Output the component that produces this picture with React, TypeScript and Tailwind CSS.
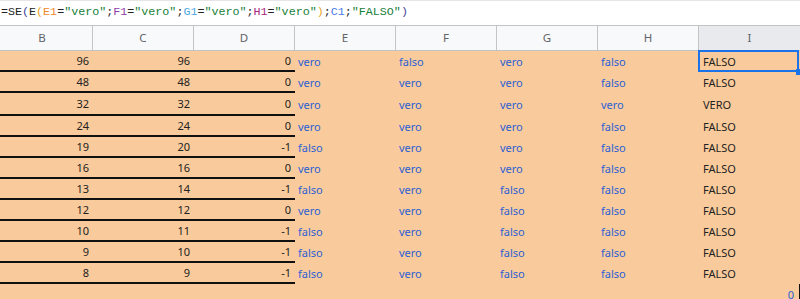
import React from 'react';

type Row = {
  b: string;
  c: string;
  d: string;
  e: string;
  f: string;
  g: string;
  h: string;
  i: string;
  tall?: boolean;
};

const rows: Row[] = [
  { b: '96', c: '96', d: '0', e: 'vero', f: 'falso', g: 'vero', h: 'falso', i: 'FALSO' },
  { b: '48', c: '48', d: '0', e: 'vero', f: 'vero', g: 'vero', h: 'falso', i: 'FALSO' },
  { b: '32', c: '32', d: '0', e: 'vero', f: 'vero', g: 'vero', h: 'vero', i: 'VERO', tall: true },
  { b: '24', c: '24', d: '0', e: 'vero', f: 'vero', g: 'vero', h: 'falso', i: 'FALSO' },
  { b: '19', c: '20', d: '-1', e: 'falso', f: 'vero', g: 'vero', h: 'falso', i: 'FALSO' },
  { b: '16', c: '16', d: '0', e: 'vero', f: 'vero', g: 'vero', h: 'falso', i: 'FALSO' },
  { b: '13', c: '14', d: '-1', e: 'falso', f: 'vero', g: 'falso', h: 'falso', i: 'FALSO' },
  { b: '12', c: '12', d: '0', e: 'vero', f: 'vero', g: 'falso', h: 'falso', i: 'FALSO' },
  { b: '10', c: '11', d: '-1', e: 'falso', f: 'vero', g: 'falso', h: 'falso', i: 'FALSO' },
  { b: '9', c: '10', d: '-1', e: 'falso', f: 'vero', g: 'falso', h: 'falso', i: 'FALSO' },
  { b: '8', c: '9', d: '-1', e: 'falso', f: 'vero', g: 'falso', h: 'falso', i: 'FALSO' },
];

const headers = ['B', 'C', 'D', 'E', 'F', 'G', 'H'];

function FormulaBar() {
  const str = 'text-[#188038]';
  return (
    <div className="h-[26px] border-t border-b border-t-[#e6e6e6] border-b-[#c4c4c4] flex items-center pl-[1px] whitespace-pre font-['Liberation_Mono',monospace] text-[11.7px] text-[#222]">
      <span>=SE</span>
      <span className="text-[#3a4599]">(</span>
      <span>E</span>
      <span className="text-[#e9a21b]">(</span>
      <span className="text-[#f08a2c]">E1</span>
      <span>=</span>
      <span className={str}>"vero"</span>
      <span>;</span>
      <span className="text-[#8e3ca8]">F1</span>
      <span>=</span>
      <span className={str}>"vero"</span>
      <span>;</span>
      <span className="text-[#4ea6df]">G1</span>
      <span>=</span>
      <span className={str}>"vero"</span>
      <span>;</span>
      <span className="text-[#a8287f]">H1</span>
      <span>=</span>
      <span className={str}>"vero"</span>
      <span className="text-[#e9a21b]">)</span>
      <span>;</span>
      <span className="text-[#4d7be8]">C1</span>
      <span>;</span>
      <span className={str}>"FALSO"</span>
      <span className="text-[#3a4599]">)</span>
    </div>
  );
}

function HeaderRow() {
  return (
    <div className="flex h-[25px] border-b border-[#c4c4c4] bg-[#f8f9fa] text-[11.5px] text-[#5f6368]">
      {headers.map((h, idx) => (
        <div
          key={h}
          className={
            idx === 0
              ? 'w-[93px] shrink-0 border-r border-[#c4c4c4] flex items-center justify-center pr-[8px]'
              : 'w-[101px] shrink-0 border-r border-[#c4c4c4] flex items-center justify-center'
          }
        >
          {h}
        </div>
      ))}
      <div className="flex-1 flex items-center justify-center bg-[#e8eaed]">I</div>
    </div>
  );
}

function DataRow({ row, selected }: { row: Row; selected: boolean }) {
  const h = row.tall ? 'h-[23px]' : 'h-[21px]';
  const blue = 'w-[101px] shrink-0 pl-[3px] text-[#2c5fd4] pt-[1px] flex items-center';
  return (
    <div className={`flex ${h}`}>
      <div className="flex w-[295px] shrink-0 border-b-2 border-[#111] text-[#222] pt-[2px]">
        <div className="w-[93px] shrink-0 flex items-center justify-end pr-[4px]">{row.b}</div>
        <div className="w-[101px] shrink-0 flex items-center justify-end pr-[4px]">{row.c}</div>
        <div className="w-[101px] shrink-0 flex items-center justify-end pr-[4px]">{row.d}</div>
      </div>
      <div className={blue}>{row.e}</div>
      <div className={blue}>{row.f}</div>
      <div className={blue}>{row.g}</div>
      <div className={blue}>{row.h}</div>
      <div className="relative flex-1 flex items-center pl-[4px] pt-[1px] text-[#222]">
        {row.i}
        {selected && (
          <>
            <div className="absolute -left-[1px] -top-[1px] right-[1px] bottom-0 border-2 border-[#1a73e8]" />
            <div className="absolute -right-[1px] -bottom-[3px] w-[5px] h-[6px] bg-[#1a73e8]" />
          </>
        )}
      </div>
    </div>
  );
}

export default function App() {
  return (
    <div className="w-[800px] h-[299px] overflow-hidden bg-white font-['Noto_Sans',sans-serif] text-[11px]">
      <FormulaBar />
      <HeaderRow />
      <div className="bg-[#f9cb9c]">
        {rows.map((r, idx) => (
          <DataRow key={idx} row={r} selected={idx === 0} />
        ))}
        <div className="flex h-[20px]">
          <div className="w-[699px] shrink-0" />
          <div className="flex-1 flex items-start justify-end pt-[3px] pr-[5px] border-r border-[#111] text-[#2c5fd4]">0</div>
        </div>
      </div>
    </div>
  );
}
